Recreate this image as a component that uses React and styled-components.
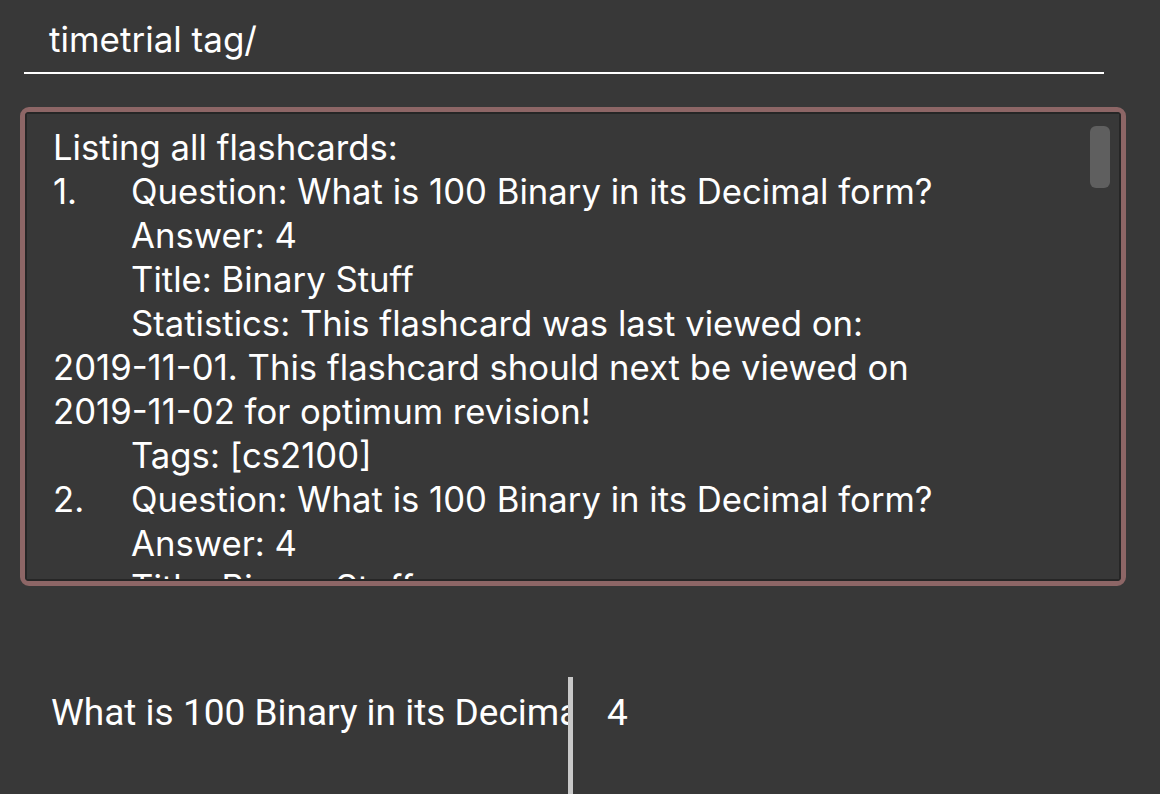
import React from 'react';
import styled, { createGlobalStyle } from 'styled-components';

const GlobalStyle = createGlobalStyle`
  html, body {
    margin: 0;
    padding: 0;
    background-color: #383838;
  }
  body {
    width: 1160px;
    height: 794px;
    overflow: hidden;
    font-family: Inter, "Noto Sans", sans-serif;
  }
`;

const Page = styled.div`
  display: flex;
  flex-direction: column;
  height: 794px;
  background-color: #383838;
  color: #ffffff;
`;

const CommandBox = styled.div`
  margin: 0 56px 0 24px;
  padding: 17px 0 0 25px;
  height: 74px;
  border-bottom: 2px solid #ffffff;
  box-sizing: border-box;
  font-size: 35px;
  line-height: 44px;
`;

const ResultCard = styled.div`
  margin: 33px 34px 0 20px;
  height: 480px;
  border: 5px solid #8d6666;
  border-radius: 9px;
  box-sizing: border-box;
  position: relative;
  overflow: hidden;
`;

const ResultInner = styled.div`
  height: 100%;
  border: 2px solid #262626;
  box-sizing: border-box;
  padding: 11px 0 0 26px;
  overflow: hidden;
`;

const Line = styled.div`
  font-size: 34.7px;
  line-height: 44px;
  white-space: pre;
  display: flex;
`;

const Num = styled.span`
  width: 78px;
  flex: none;
`;

const Scrollbar = styled.div`
  position: absolute;
  top: 14px;
  right: 11px;
  width: 20px;
  height: 62px;
  border-radius: 6px;
  background-color: #5f5f5f;
`;

const ListRow = styled.div`
  margin-top: 91px;
  display: flex;
  height: 117px;
`;

const QuestionCell = styled.div`
  width: 517px;
  padding-left: 51px;
  overflow: hidden;
  white-space: nowrap;
  font-family: Roboto, sans-serif;
  font-size: 37px;
  line-height: 72px;
`;

const Divider = styled.div`
  width: 5px;
  background-color: #c8c8c8;
`;

const AnswerCell = styled.div`
  padding-left: 34px;
  font-family: Roboto, sans-serif;
  font-size: 37px;
  line-height: 72px;
`;

const lines = [
  { num: '', text: 'Listing all flashcards:' },
  { num: '1.', text: 'Question: What is 100 Binary in its Decimal form?' },
  { num: ' ', text: 'Answer: 4' },
  { num: ' ', text: 'Title: Binary Stuff' },
  { num: ' ', text: 'Statistics: This flashcard was last viewed on:' },
  { num: '', text: '2019-11-01. This flashcard should next be viewed on' },
  { num: '', text: '2019-11-02 for optimum revision!' },
  { num: ' ', text: 'Tags: [cs2100]' },
  { num: '2.', text: 'Question: What is 100 Binary in its Decimal form?' },
  { num: ' ', text: 'Answer: 4' },
  { num: ' ', text: 'Title: Binary Stuff' },
];

const App = () => {
  return (
    <Page>
      <GlobalStyle />
      <CommandBox>timetrial tag/</CommandBox>
      <ResultCard>
        <ResultInner>
          {lines.map((l, i) => (
            <Line key={i}>
              {l.num !== '' && <Num>{l.num}</Num>}
              <span>{l.text}</span>
            </Line>
          ))}
        </ResultInner>
        <Scrollbar />
      </ResultCard>
      <ListRow>
        <QuestionCell>What is 100 Binary in its Decimal form?</QuestionCell>
        <Divider />
        <AnswerCell>4</AnswerCell>
      </ListRow>
    </Page>
  );
};

export default App;
